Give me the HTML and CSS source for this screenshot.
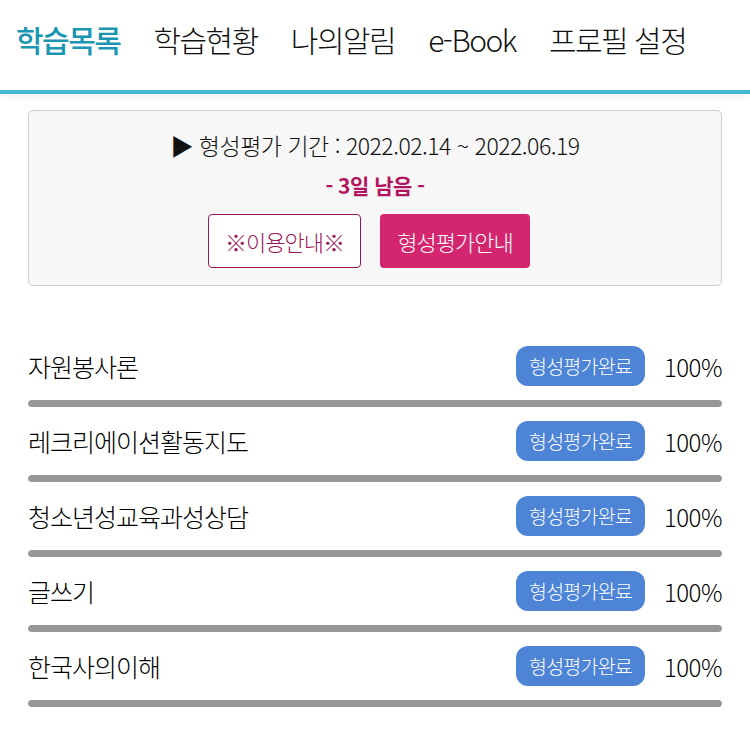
FILE: index.html
```html
<!DOCTYPE html>
<html lang="ko">

<head>
    <meta charset="UTF-8">
    <meta name="viewport" content="width=device-width, initial-scale=1.0">
    <title>학습목록</title>
    <link rel="stylesheet" href="styles.css">
</head>

<body>
    <div class="header">
        <a class="menu on">학습목록</a>
        <a class="menu">학습현황</a>
        <a class="menu">나의알림</a>
        <a class="menu">e-Book</a>
        <a class="menu">프로필 설정</a>
    </div>

    <div class="content">
        <div class="period">
            <div class="periodText">▶ 형성평가 기간 : 2022.02.14 ~ 2022.06.19</div>
            <div class="dday">- 3일 남음 -</div>
            <div class="btns">
                <a class="btnGuide">※이용안내※</a>
                <a class="btnTest">형성평가안내</a>
            </div>
        </div>

        <ul class="lecList">
            <li>
                <div class="lecRow">
                    <span class="lecName">자원봉사론</span>
                    <span class="badge">형성평가완료</span>
                    <span class="rate">100%</span>
                </div>
                <div class="bar"><div class="barFill" style="width: 100%"></div></div>
            </li>
            <li>
                <div class="lecRow">
                    <span class="lecName">레크리에이션활동지도</span>
                    <span class="badge">형성평가완료</span>
                    <span class="rate">100%</span>
                </div>
                <div class="bar"><div class="barFill" style="width: 100%"></div></div>
            </li>
            <li>
                <div class="lecRow">
                    <span class="lecName">청소년성교육과성상담</span>
                    <span class="badge">형성평가완료</span>
                    <span class="rate">100%</span>
                </div>
                <div class="bar"><div class="barFill" style="width: 100%"></div></div>
            </li>
            <li>
                <div class="lecRow">
                    <span class="lecName">글쓰기</span>
                    <span class="badge">형성평가완료</span>
                    <span class="rate">100%</span>
                </div>
                <div class="bar"><div class="barFill" style="width: 100%"></div></div>
            </li>
            <li>
                <div class="lecRow">
                    <span class="lecName">한국사의이해</span>
                    <span class="badge">형성평가완료</span>
                    <span class="rate">100%</span>
                </div>
                <div class="bar"><div class="barFill" style="width: 100%"></div></div>
            </li>
        </ul>
    </div>
</body>

</html>
```

FILE: styles.css
```css
body {
    margin: 0;
    padding: 0;
    background-color: white;
    font-family: "Noto Sans CJK KR", "Noto Sans", sans-serif;
    color: #111;
}

.header {
    display: flex;
    align-items: center;
    gap: 33px;
    height: 94px;
    padding: 0 16px;
    border-bottom: 4px solid #45b7d3;
    box-shadow: 0 3px 6px rgba(0, 0, 0, 0.06);
    box-sizing: border-box;
}

.menu {
    font-size: 30px;
    font-weight: 300;
    letter-spacing: -1.5px;
    color: #111;
    line-height: 1;
    margin-bottom: 12px;
}

.menu.on {
    color: #1a96b3;
    font-weight: 500;
}

.content {
    padding: 16px 28px 0;
}

.period {
    background-color: #f7f7f7;
    border: 1.5px solid #cdcdcd;
    border-radius: 5px;
    text-align: center;
    padding: 16px 0 17px;
}

.periodText {
    font-size: 23px;
    font-weight: 300;
    letter-spacing: -0.5px;
    line-height: 36px;
}

.dday {
    font-size: 21px;
    font-weight: 700;
    color: #b3145f;
    line-height: 40px;
    letter-spacing: -0.5px;
    margin-top: 2px;
}

.btns {
    display: flex;
    justify-content: center;
    gap: 19px;
    margin-top: 9px;
    padding-right: 12px;
}

.btns a {
    display: flex;
    align-items: center;
    justify-content: center;
    height: 54px;
    box-sizing: border-box;
    border-radius: 4px;
    font-size: 22px;
    font-weight: 300;
    letter-spacing: -1px;
}

.btnGuide {
    width: 153px;
    background-color: white;
    border: 1.5px solid #9c1758;
    color: #9c1758;
}

.btnTest {
    width: 150px;
    background-color: #d4266f;
    color: white;
}

.lecList {
    list-style: none;
    margin: 59px 0 0;
    padding: 0;
}

.lecList li {
    margin-bottom: 13px;
}

.lecRow {
    display: flex;
    align-items: center;
    height: 42px;
}

.lecName {
    flex: 1;
    font-size: 25px;
    font-weight: 300;
    letter-spacing: -1px;
    color: #000;
}

.badge {
    background-color: #4d84d6;
    color: white;
    border-radius: 12px;
    font-size: 19.5px;
    font-weight: 300;
    letter-spacing: -0.8px;
    width: 129px;
    height: 40px;
    line-height: 40px;
    text-align: center;
}

.rate {
    width: 77px;
    text-align: right;
    font-size: 24px;
    font-weight: 300;
    letter-spacing: -0.5px;
    color: #000;
}

.bar {
    margin-top: 13px;
    height: 7px;
    background-color: #e4e4e4;
    border-radius: 4px;
    overflow: hidden;
}

.barFill {
    height: 100%;
    background-color: #979797;
    border-radius: 4px;
}
```
